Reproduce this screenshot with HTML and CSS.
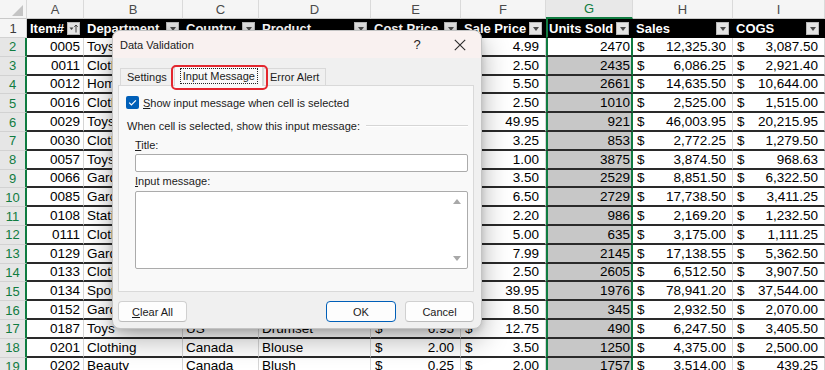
FILE: index.html
```html
<!DOCTYPE html>
<html>
<head>
<meta charset="utf-8">
<link rel="stylesheet" href="styles.css">
</head>
<body>
<div class="screen">
  <div class="sheet">
    <div class="row colhdr">
      <div class="corner"></div>
      <div>A</div><div>B</div><div>C</div><div>D</div><div>E</div><div>F</div><div class="csel">G</div><div>H</div><div>I</div>
    </div>
    <div class="row hdr">
      <div class="rn">1</div>
      <div class="h">Item#<span class="fb sort"><svg width="11" height="11" viewBox="0 0 11 11"><path d="M1.5 4.5h4l-2 2.5z" fill="#444"/><path d="M8 9.5V2M6.3 3.8L8 2l1.7 1.8" fill="none" stroke="#444" stroke-width="1"/></svg></span></div>
      <div class="h">Department<span class="fb"></span></div>
      <div class="h">Country<span class="fb"></span></div>
      <div class="h">Product<span class="fb"></span></div>
      <div class="h">Cost Price<span class="fb"></span></div>
      <div class="h">Sale Price<span class="fb"></span></div>
      <div class="h gh">Units Sold<span class="fb"></span></div>
      <div class="h">Sales<span class="fb"></span></div>
      <div class="h last">COGS<span class="fb"></span></div>
    </div>
    <div class="row"><div class="rn">2</div><div class="n">0005</div><div>Toys</div><div>US</div><div>Action Figure</div><div class="acc"><span>$</span><span>1.25</span></div><div class="acc"><span>$</span><span>4.99</span></div><div class="n g act">2470</div><div class="acc"><span>$</span><span>12,325.30</span></div><div class="acc"><span>$</span><span>3,087.50</span></div></div>
    <div class="row"><div class="rn">3</div><div class="n">0011</div><div>Clothing</div><div>US</div><div>T-Shirt</div><div class="acc"><span>$</span><span>1.20</span></div><div class="acc"><span>$</span><span>2.50</span></div><div class="n g">2435</div><div class="acc"><span>$</span><span>6,086.25</span></div><div class="acc"><span>$</span><span>2,921.40</span></div></div>
    <div class="row"><div class="rn">4</div><div class="n">0012</div><div>Home</div><div>Canada</div><div>Candle</div><div class="acc"><span>$</span><span>4.00</span></div><div class="acc"><span>$</span><span>5.50</span></div><div class="n g">2661</div><div class="acc"><span>$</span><span>14,635.50</span></div><div class="acc"><span>$</span><span>10,644.00</span></div></div>
    <div class="row"><div class="rn">5</div><div class="n">0016</div><div>Clothing</div><div>UK</div><div>Socks</div><div class="acc"><span>$</span><span>1.50</span></div><div class="acc"><span>$</span><span>2.50</span></div><div class="n g">1010</div><div class="acc"><span>$</span><span>2,525.00</span></div><div class="acc"><span>$</span><span>1,515.00</span></div></div>
    <div class="row"><div class="rn">6</div><div class="n">0029</div><div>Toys</div><div>US</div><div>Board Game</div><div class="acc"><span>$</span><span>21.95</span></div><div class="acc"><span>$</span><span>49.95</span></div><div class="n g">921</div><div class="acc"><span>$</span><span>46,003.95</span></div><div class="acc"><span>$</span><span>20,215.95</span></div></div>
    <div class="row"><div class="rn">7</div><div class="n">0030</div><div>Clothing</div><div>Canada</div><div>Hat</div><div class="acc"><span>$</span><span>1.50</span></div><div class="acc"><span>$</span><span>3.25</span></div><div class="n g">853</div><div class="acc"><span>$</span><span>2,772.25</span></div><div class="acc"><span>$</span><span>1,279.50</span></div></div>
    <div class="row"><div class="rn">8</div><div class="n">0057</div><div>Toys</div><div>UK</div><div>Yo-Yo</div><div class="acc"><span>$</span><span>0.25</span></div><div class="acc"><span>$</span><span>1.00</span></div><div class="n g">3875</div><div class="acc"><span>$</span><span>3,874.50</span></div><div class="acc"><span>$</span><span>968.63</span></div></div>
    <div class="row"><div class="rn">9</div><div class="n">0066</div><div>Garden</div><div>US</div><div>Seeds</div><div class="acc"><span>$</span><span>2.50</span></div><div class="acc"><span>$</span><span>3.50</span></div><div class="n g">2529</div><div class="acc"><span>$</span><span>8,851.50</span></div><div class="acc"><span>$</span><span>6,322.50</span></div></div>
    <div class="row"><div class="rn">10</div><div class="n">0085</div><div>Garden</div><div>Canada</div><div>Gloves</div><div class="acc"><span>$</span><span>1.25</span></div><div class="acc"><span>$</span><span>6.50</span></div><div class="n g">2729</div><div class="acc"><span>$</span><span>17,738.50</span></div><div class="acc"><span>$</span><span>3,411.25</span></div></div>
    <div class="row"><div class="rn">11</div><div class="n">0108</div><div>Stationery</div><div>US</div><div>Notebook</div><div class="acc"><span>$</span><span>1.25</span></div><div class="acc"><span>$</span><span>2.20</span></div><div class="n g">986</div><div class="acc"><span>$</span><span>2,169.20</span></div><div class="acc"><span>$</span><span>1,232.50</span></div></div>
    <div class="row"><div class="rn">12</div><div class="n">0111</div><div>Clothing</div><div>UK</div><div>Scarf</div><div class="acc"><span>$</span><span>1.75</span></div><div class="acc"><span>$</span><span>5.00</span></div><div class="n g">635</div><div class="acc"><span>$</span><span>3,175.00</span></div><div class="acc"><span>$</span><span>1,111.25</span></div></div>
    <div class="row"><div class="rn">13</div><div class="n">0129</div><div>Garden</div><div>US</div><div>Trowel</div><div class="acc"><span>$</span><span>2.50</span></div><div class="acc"><span>$</span><span>7.99</span></div><div class="n g">2145</div><div class="acc"><span>$</span><span>17,138.55</span></div><div class="acc"><span>$</span><span>5,362.50</span></div></div>
    <div class="row"><div class="rn">14</div><div class="n">0133</div><div>Clothing</div><div>Canada</div><div>Belt</div><div class="acc"><span>$</span><span>1.50</span></div><div class="acc"><span>$</span><span>2.50</span></div><div class="n g">2605</div><div class="acc"><span>$</span><span>6,512.50</span></div><div class="acc"><span>$</span><span>3,907.50</span></div></div>
    <div class="row"><div class="rn">15</div><div class="n">0134</div><div>Sports</div><div>US</div><div>Basketball</div><div class="acc"><span>$</span><span>19.00</span></div><div class="acc"><span>$</span><span>39.95</span></div><div class="n g">1976</div><div class="acc"><span>$</span><span>78,941.20</span></div><div class="acc"><span>$</span><span>37,544.00</span></div></div>
    <div class="row"><div class="rn">16</div><div class="n">0152</div><div>Garden</div><div>UK</div><div>Hose</div><div class="acc"><span>$</span><span>6.00</span></div><div class="acc"><span>$</span><span>8.50</span></div><div class="n g">345</div><div class="acc"><span>$</span><span>2,932.50</span></div><div class="acc"><span>$</span><span>2,070.00</span></div></div>
    <div class="row"><div class="rn">17</div><div class="n">0187</div><div>Toys</div><div>US</div><div>Drumset</div><div class="acc"><span>$</span><span>6.95</span></div><div class="acc"><span>$</span><span>12.75</span></div><div class="n g">490</div><div class="acc"><span>$</span><span>6,247.50</span></div><div class="acc"><span>$</span><span>3,405.50</span></div></div>
    <div class="row"><div class="rn">18</div><div class="n">0201</div><div>Clothing</div><div>Canada</div><div>Blouse</div><div class="acc"><span>$</span><span>2.00</span></div><div class="acc"><span>$</span><span>3.50</span></div><div class="n g">1250</div><div class="acc"><span>$</span><span>4,375.00</span></div><div class="acc"><span>$</span><span>2,500.00</span></div></div>
    <div class="row"><div class="rn">19</div><div class="n">0202</div><div>Beauty</div><div>Canada</div><div>Blush</div><div class="acc"><span>$</span><span>0.25</span></div><div class="acc"><span>$</span><span>2.00</span></div><div class="n g">1757</div><div class="acc"><span>$</span><span>3,514.00</span></div><div class="acc"><span>$</span><span>439.25</span></div></div>
  </div>

  <div class="dlg">
    <div class="titlebar">
      <span class="ttl">Data Validation</span>
      <span class="help">?</span>
      <span class="close"><svg width="12" height="12" viewBox="0 0 12 12"><path d="M0.8 0.8L11.2 11.2M11.2 0.8L0.8 11.2" stroke="#2b2b2b" stroke-width="1.1"/></svg></span>
    </div>
    <div class="dbody">
      <div class="tabs">
        <div class="tab">Settings</div>
        <div class="tab on"><span class="focus">Input Message</span></div>
        <div class="tab last-tab">Error Alert</div>
      </div>
      <div class="panel">
        <div class="chkrow">
          <span class="chk"><svg width="13" height="13" viewBox="0 0 13 13"><path d="M3.2 6.7l2.2 2.2L9.9 4.4" fill="none" stroke="#fff" stroke-width="1.2"/></svg></span>
          <span class="chklbl"><u>S</u>how input message when cell is selected</span>
        </div>
        <div class="legend"><span>When cell is selected, show this input message:</span><span class="groove"></span></div>
        <div class="lbl"><u>T</u>itle:</div>
        <div class="field"></div>
        <div class="lbl lbl2"><u>I</u>nput message:</div>
        <div class="area">
          <div class="sb">
            <span class="up"></span>
            <span class="down"></span>
          </div>
        </div>
      </div>
      <div class="btns">
        <div class="btn"><span><u>C</u>lear All</span></div>
        <div class="spacer"></div>
        <div class="btn ok">OK</div>
        <div class="btn">Cancel</div>
      </div>
    </div>
    <div class="hilite"></div>
  </div>
</div>
</body>
</html>
```
FILE: styles.css
```css
* { box-sizing: border-box; }
html, body { margin: 0; padding: 0; }
body { width: 825px; height: 370px; overflow: hidden; background: #fff; }

.screen { position: relative; width: 825px; height: 370px; overflow: hidden; }

.sheet {
  font-family: "Liberation Sans", Arial, sans-serif;
  font-size: 13.5px;
  color: #000;
}

.row {
  display: grid;
  grid-template-columns: 27px 57px 99px 76px 112px 90px 85px 87px 100px 1fr;
  height: 18.8px;
}

.row > div {
  display: flex;
  align-items: center;
  white-space: nowrap;
  overflow: hidden;
  padding: 0 3px;
  border-right: 1px solid #d6d6d6;
  border-bottom: 2px solid #2a2a2a;
}

/* column letters */
.colhdr { height: 19px; }
.colhdr > div {
  justify-content: center;
  background: #f5f5f5;
  color: #4a4a4a;
  font-size: 13px;
  border-right: 1px solid #dadada;
  border-bottom: 1px solid #c9c9c9;
}
.colhdr > div.csel {
  color: #107c41;
  background: #e8e8e8;
  border-bottom: 2px solid #107c41;
}
.corner { position: relative; }
.corner::after {
  content: "";
  position: absolute;
  right: 3px;
  bottom: 2px;
  width: 0; height: 0;
  border-left: 11px solid transparent;
  border-bottom: 11px solid #c4c4c4;
}

/* row numbers */
.row > div.rn {
  justify-content: center;
  background: #e6e6e6;
  color: #107c41;
  font-size: 13px;
  border-right: 2px solid #107c41;
  border-bottom: 1px solid #d2d2d2;
}

/* header row */
.hdr { height: 19px; }
.hdr > div.rn {
  background: #f5f5f5;
  color: #3a3a3a;
  border-right: 1px solid #d0d0d0;
}
.row > div.h {
  position: relative;
  background: #000;
  color: #fff;
  font-weight: bold;
  font-size: 13px;
  border-right: 1px solid #000;
  border-bottom: 1px solid #000;
}
.row > div.gh { border-left: 2px solid #107c41; padding-left: 1px; }
.fb {
  position: absolute;
  right: 3px;
  top: 3px;
  width: 13px;
  height: 13px;
  background: #e4e4e4;
  border: 1px solid #b8b8b8;
  display: flex;
  align-items: center;
  justify-content: center;
}
.fb::after {
  content: "";
  width: 0; height: 0;
  border-left: 3px solid transparent;
  border-right: 3px solid transparent;
  border-top: 4px solid #4a4a4a;
}
.fb.sort::after { display: none; }
.last .fb { right: 5px; }

/* data cells */
.row > div.n { justify-content: flex-end; }
.row > div.acc { justify-content: space-between; padding: 0 6px 0 4px; }
.row > div.g {
  background: #c7c7c7;
  border-left: 2px solid #107c41;
  border-right: 2px solid #107c41;
  padding-right: 1px;
}
.row > div.g.act { background: #fff; }

/* dialog */
.dlg {
  position: absolute;
  left: 112px;
  top: 30px;
  width: 370px;
  border: 1px solid #c4c4c4;
  border-radius: 8px;
  background: #f0f0f0;
  font-family: "Liberation Sans", Arial, sans-serif;
  font-size: 11px;
  color: #1b1b1b;
  box-shadow: 0 10px 28px rgba(0,0,0,0.32), 0 2px 6px rgba(0,0,0,0.14);
}
.titlebar {
  height: 27px;
  display: flex;
  align-items: center;
  background: #f9f1f0;
  border-radius: 8px 8px 0 0;
  padding-left: 7px;
}
.ttl { flex: 1; font-size: 11px; color: #1a1a1a; }
.help { width: 20px; text-align: center; font-size: 13px; margin-right: 18px; color: #222; }
.close { width: 30px; height: 27px; display: flex; align-items: center; justify-content: center; margin-right: 6px; }

.dbody { padding: 0 7px 6px 5px; }

.tabs {
  display: flex;
  align-items: flex-end;
  height: 19px;
  margin-top: 8px;
  padding-left: 2px;
  position: relative;
  z-index: 1;
}
.tab {
  height: 17px;
  padding: 0 5px 0 6px;
  border: 1px solid #d9d9d9;
  border-bottom: none;
  background: #f0f0f0;
  display: flex;
  align-items: center;
}
.tab.on {
  height: 21px;
  margin-bottom: -1px;
  background: #f9f9f9;
  padding: 0 4px 0 5px;
  margin-left: 1px;
}
.tab.last-tab { padding: 0 6px 0 6px; margin-left: 0; }
.focus {
  border: 1px dotted #222;
  padding: 1px 2px;
  line-height: 12px;
}

.panel {
  height: 207px;
  border: 1px solid #d9d9d9;
  background: #f9f9f9;
  padding: 10px 5px 0 7px;
}
.chkrow { display: flex; align-items: center; height: 13px; }
.chk {
  width: 13px; height: 13px;
  border-radius: 2px;
  background: #005fb8;
  display: flex;
  flex: none;
}
.chklbl { margin-left: 4px; }
.legend {
  display: flex;
  align-items: center;
  height: 13px;
  margin-top: 10px;
  margin-left: 1px;
}
.groove {
  flex: 1;
  height: 2px;
  margin-left: 6px;
  border-top: 1px solid #d6d6d6;
  border-bottom: 1px solid #fff;
}
.lbl { height: 13px; line-height: 13px; margin-top: 7px; margin-left: 9px; }
.lbl2 { margin-top: 3px; }
.field {
  height: 18px;
  margin: 2px 0 0 9px;
  background: #fff;
  border: 1px solid #ababab;
  border-radius: 2px;
}
.area {
  height: 78px;
  margin: 3px 0 0 9px;
  background: #fff;
  border: 1px solid #ababab;
  border-radius: 2px;
  display: flex;
  justify-content: flex-end;
}
.sb {
  width: 18px;
  display: flex;
  flex-direction: column;
  justify-content: space-between;
  align-items: center;
  padding: 7px 0;
  margin-right: 1px;
}
.up, .down { width: 0; height: 0; border-left: 4px solid transparent; border-right: 4px solid transparent; }
.up { border-bottom: 5px solid #a8a8a8; }
.down { border-top: 5px solid #a8a8a8; }

.btns { display: flex; margin-top: 9px; height: 21px; }
.spacer { flex: 1; }
.btn {
  width: 69px;
  height: 21px;
  background: #fdfdfd;
  border: 1px solid #d0d0d0;
  border-bottom-color: #bcbcbc;
  border-radius: 4px;
  display: flex;
  align-items: center;
  justify-content: center;
  margin-left: 9px;
}
.btn:first-child { margin-left: 0; }
.btn.ok { width: 70px; border: 1.5px solid #005fb8; margin-left: 0; }

.hilite {
  position: absolute;
  left: 58px;
  top: 34px;
  width: 97px;
  height: 25px;
  border: 2px solid #e3262e;
  border-radius: 5px;
  z-index: 2;
}
```
